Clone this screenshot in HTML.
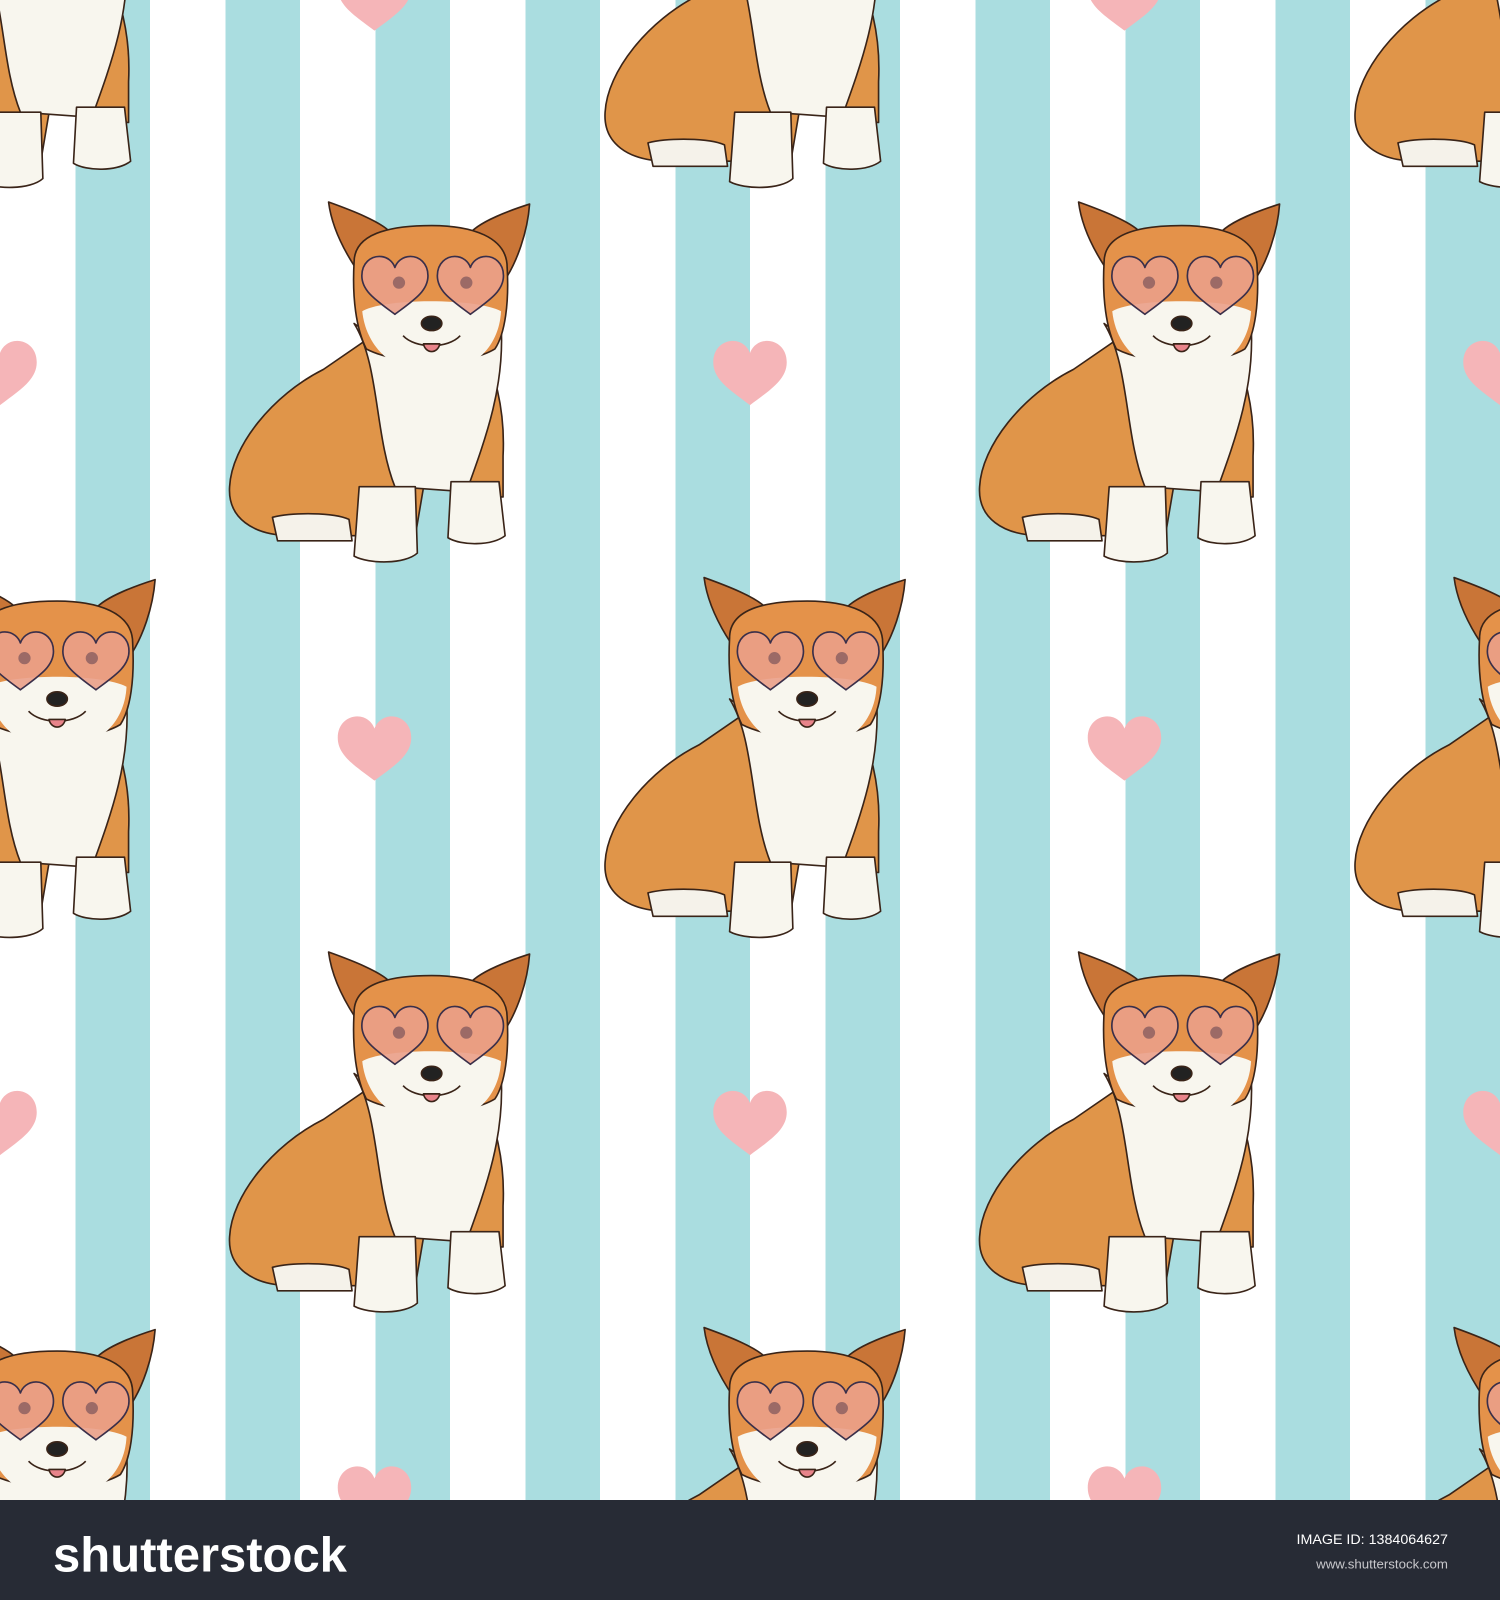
<!DOCTYPE html>
<html><head><meta charset="utf-8"><style>
html,body{margin:0;padding:0;width:1500px;height:1600px;overflow:hidden;background:#fff}
svg{display:block;overflow:hidden}
</style></head><body>
<svg width="1500" height="1600" viewBox="0 0 1470 1568" preserveAspectRatio="none" xmlns="http://www.w3.org/2000/svg">
<defs>
<pattern id="st" x="0" y="0" width="147" height="1470" patternUnits="userSpaceOnUse">
<rect x="74" y="0" width="73.5" height="1470" fill="#aadde0"/>
</pattern>
<path id="ht" d="M0,30 C-20,15 -36,5 -36,-12 C-36,-26 -26,-33 -17,-33 C-8,-33 -2,-27 0,-21 C2,-27 8,-33 17,-33 C26,-33 36,-26 36,-12 C36,5 20,15 0,30 Z" fill="#f5b5b8"/>
<g id="cg" stroke="#3a2418" stroke-width="1.6" stroke-linejoin="round">
 <path d="M-50,-5 C-100,20 -140,70 -142,110 C-144,140 -120,158 -80,158 L40,158 L60,40 L30,-60 Z" fill="#e09549"/>
 <path d="M95,-40 C120,-10 128,40 126,80 L126,120 L80,120 Z" fill="#e09549"/>
 <path d="M-100,140 C-80,135 -40,135 -25,142 L-22,163 L-95,163 Z" fill="#f5f2ea"/>
 <path d="M-20,-50 C5,-10 0,60 20,110 L90,115 C110,60 128,10 124,-50 C90,-20 20,-20 -20,-50 Z" fill="#f8f6ee"/>
 <path d="M-15,110 L40,110 L42,175 C30,186 -5,186 -20,178 Z" fill="#f8f6ee"/>
 <path d="M75,105 L122,105 L128,158 C115,168 85,168 72,160 Z" fill="#f8f6ee"/>
 <path d="M-45,-169 C-20,-160 5,-150 15,-140 L-12,-95 C-30,-120 -42,-145 -45,-169 Z" fill="#c97537"/>
 <path d="M152,-167 C130,-160 105,-150 95,-140 L126,-90 C140,-110 150,-140 152,-167 Z" fill="#c97537"/>
 <path d="M-20,-110 C-20,-140 20,-146 56,-146 C95,-146 130,-135 130,-105 C132,-70 128,-40 118,-25 C90,-8 25,-8 -8,-25 C-18,-45 -22,-75 -20,-110 Z" fill="#e4924a"/>
 <path d="M-12,-62 C10,-75 100,-75 124,-62 C122,-25 95,-2 56,0 C20,-2 -8,-25 -12,-62 Z" fill="#f8f6ee" stroke="none"/>
 <g fill="#eaa088" fill-opacity=".9" stroke="#3a2f4a" stroke-width="1.8">
  <path transform="translate(20,-86) scale(0.9)" d="M0,30 C-20,15 -36,5 -36,-12 C-36,-26 -26,-33 -17,-33 C-8,-33 -2,-27 0,-21 C2,-27 8,-33 17,-33 C26,-33 36,-26 36,-12 C36,5 20,15 0,30 Z"/>
  <path transform="translate(94,-86) scale(0.9)" d="M0,30 C-20,15 -36,5 -36,-12 C-36,-26 -26,-33 -17,-33 C-8,-33 -2,-27 0,-21 C2,-27 8,-33 17,-33 C26,-33 36,-26 36,-12 C36,5 20,15 0,30 Z"/>
 </g>
 <circle cx="24" cy="-90" r="6" fill="#9c6a66" stroke="none"/>
 <circle cx="90" cy="-90" r="6" fill="#9c6a66" stroke="none"/>
 <ellipse cx="56" cy="-50" rx="10" ry="7" fill="#222" />
 <path d="M28,-38 C40,-25 72,-25 84,-38" fill="none"/>
 <path d="M48,-30 C50,-20 62,-20 64,-30 Z" fill="#e8848a"/>
</g>
</defs>
<rect width="1470" height="1470" fill="#fff"/>
<rect width="1470" height="1470" fill="url(#st)"/>
<g>
<use href="#ht" x="735" y="367"/><use href="#ht" x="0" y="367"/><use href="#ht" x="1470" y="367"/>
<use href="#ht" x="367" y="735"/><use href="#ht" x="1102" y="735"/>
<use href="#ht" x="735" y="1102"/><use href="#ht" x="0" y="1102"/><use href="#ht" x="1470" y="1102"/>
<use href="#ht" x="367" y="0"/><use href="#ht" x="1102" y="0"/>
<use href="#ht" x="367" y="1470"/><use href="#ht" x="1102" y="1470"/>
</g>
<g>
<use href="#cg" x="735" y="0"/><use href="#cg" x="0" y="0"/><use href="#cg" x="1470" y="0"/>
<use href="#cg" x="367" y="367"/><use href="#cg" x="1102" y="367"/>
<use href="#cg" x="0" y="735"/><use href="#cg" x="735" y="735"/><use href="#cg" x="1470" y="735"/>
<use href="#cg" x="367" y="1102"/><use href="#cg" x="1102" y="1102"/>
<use href="#cg" x="0" y="1470"/><use href="#cg" x="735" y="1470"/><use href="#cg" x="1470" y="1470"/>
</g>
<rect x="0" y="1470" width="1470" height="98" fill="#272b35"/>
<text x="52" y="1540" font-family="Liberation Sans, sans-serif" font-weight="bold" font-size="48" fill="#fff" textLength="288" lengthAdjust="spacingAndGlyphs">shutterstock</text>
<text x="1419" y="1513" text-anchor="end" font-family="Liberation Sans, sans-serif" font-size="14" fill="#fff">IMAGE ID: 1384064627</text>
<text x="1419" y="1537" text-anchor="end" font-family="Liberation Sans, sans-serif" font-size="13" fill="#c8c8cc">www.shutterstock.com</text>
</svg>
</body></html>
